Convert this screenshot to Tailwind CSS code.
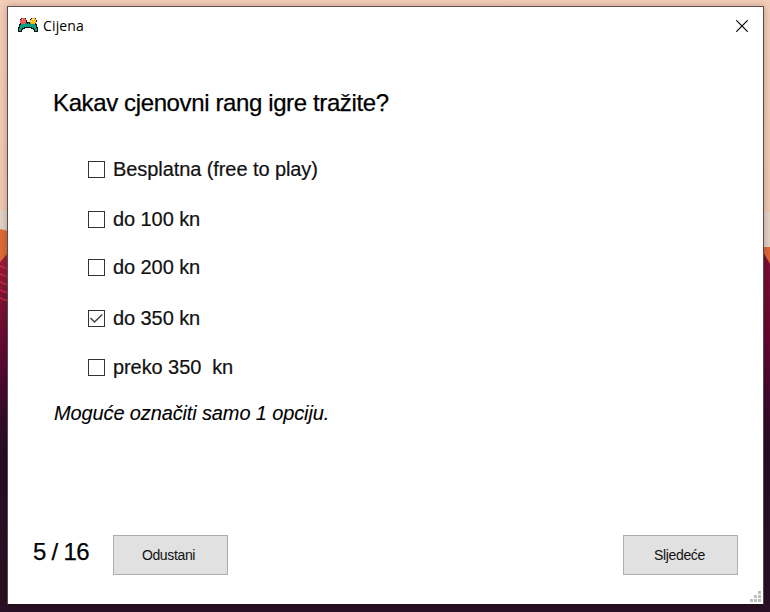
<!DOCTYPE html>
<html lang="hr">
<head>
<meta charset="utf-8">
<title>Cijena</title>
<script src="https://cdn.jsdelivr.net/npm/@tailwindcss/browser@4"></script>
</head>
<body class="relative h-[612px] w-[770px] overflow-hidden bg-[#f2cab4] pt-[6px] pl-[7px] font-['Liberation_Sans',Arial,sans-serif] text-black">
<svg class="absolute inset-0" width="770" height="612" viewBox="0 0 770 612">
  <defs>
    <linearGradient id="sky" x1="0" y1="0" x2="0" y2="1"><stop offset="0" stop-color="#f4cdb8"/><stop offset="1" stop-color="#e4bda2"/></linearGradient>
    <linearGradient id="hill" x1="0" y1="0" x2="0" y2="1"><stop offset="0" stop-color="#a51c39"/><stop offset=".12" stop-color="#7f1334"/><stop offset=".3" stop-color="#5b0932"/><stop offset=".45" stop-color="#350d2d"/><stop offset=".55" stop-color="#260e24"/><stop offset="1" stop-color="#2a1025"/></linearGradient>
    <linearGradient id="hillRight" x1="0" y1="0" x2="0" y2="1"><stop offset="0" stop-color="#7d1035"/><stop offset=".25" stop-color="#65052f"/><stop offset=".4" stop-color="#42082f"/><stop offset=".55" stop-color="#260e24"/><stop offset="1" stop-color="#2a1025"/></linearGradient>
  </defs>
  <rect width="770" height="612" fill="url(#sky)"/>
  <path d="M0 210h8v20H0zM762 212h8v36h-8z" fill="#e2d2c4"/>
  <path d="M0 229l8 2v37H0z" fill="#dc6c34"/>
  <path d="M762 247h8v20h-8z" fill="#df6534"/>
  <path d="M0 262l8-9v359H0z" fill="url(#hill)"/>
  <path d="M762 250l8 14v348h-8z" fill="url(#hillRight)"/>
  <path d="M0 266l8 3M0 274l8 3M0 282l8 3M0 290l8 3M0 298l8 3" stroke="#c02e3e" stroke-width="1.5"/>
  <path d="M0 600h770v12H0z" fill="#2a1025"/>
</svg>
<main class="relative flex h-[599px] w-[757px] flex-col border border-[#5f4f48] border-x-[#5c4a4a] border-b-[#1f0c1c] bg-white shadow-[0_0_7px_rgba(0,0,0,0.25)]">
  <header class="flex h-[38px] shrink-0 items-center pl-[10px] pr-[15px]">
    <svg class="-mt-[2px] shrink-0" width="20" height="16" viewBox="0 0 20 16" shape-rendering="crispEdges">
      <path d="M2 5h16v2h1v3h1v5h-4v-2h-1v-1h-2v-1H7v1H5v1H4v2H0v-5h1V7h1z" fill="#061512"/>
      <path d="M3 6h14v2h1v3h1v3h-2v-2h-1v-1h-2v-1H6v1H4v1H3v2H1v-3h1V8h1z" fill="#0c9d80"/>
      <path d="M2 3h1V2h1V1h3v1h1v4H7v1H3V6H2zM12 3h1V2h1V1h3v1h1v4h-1v1h-4V6h-1z" fill="#f35b5b"/>
      <path d="M12 3h1V2h1V1h3v1h1v4h-1v1h-4V6h-1z" fill="#ffb60d"/>
      <path d="M3 1h1v1H3zM7 1h1v1H7zM2 2h1v1H2zM8 3h1v2H8zM13 1h1v1h-1zM17 1h1v1h-1zM12 2h1v1h-1zM18 3h1v2h-1zM9 6h1v1H9zM11 6h1v1h-1z" fill="#241512"/>
      <path d="M14 2h2v1h-2zM13 4h1v1h-1zM16 4h1v1h-1z" fill="#fff2bd"/><path d="M4 2h1v1H4z" fill="#ffa5a3"/>
    </svg>
    <h1 class="ml-[5px] -mt-px font-['Open_Sans','Noto_Sans',sans-serif] text-[14px] leading-5 tracking-[0.15px]">Cijena</h1>
    <svg class="ml-auto" width="12" height="12" viewBox="0 0 12 12"><path d="M.3.3l11.400 11.400M11.700.3L.3 11.700" stroke="#000" stroke-width="1.200"/></svg>
  </header>
  <h2 class="mt-[44px] ml-[45px] h-7 shrink-0 text-[24px] leading-7 tracking-[-0.38px] [-webkit-text-stroke:0.25px_#000]">Kakav cjenovni rang igre tražite?</h2>
  <div class="mt-[40px] ml-[80px] grid shrink-0 grid-rows-[50px_48px_51px_49px_24px] text-[20px] leading-6 tracking-[-0.08px] text-[#111] [-webkit-text-stroke:0.2px_#111]">
    <label class="flex h-6 items-center gap-[8px]"><span class="size-[17px] border border-[#333]"></span><span>Besplatna (free to play)</span></label>
    <label class="flex h-6 items-center gap-[8px]"><span class="size-[17px] border border-[#333]"></span><span>do 100 kn</span></label>
    <label class="flex h-6 items-center gap-[8px]"><span class="size-[17px] border border-[#333]"></span><span>do 200 kn</span></label>
    <label class="flex h-6 items-center gap-[8px]"><span class="size-[17px] border border-[#333]"><svg width="15" height="15" viewBox="0 0 15 15"><path d="M1.500 7l4 4L13.200 3.500" fill="none" stroke="#444" stroke-width="1.500"/></svg></span><span>do 350 kn</span></label>
    <label class="flex h-6 items-center gap-[8px]"><span class="size-[17px] border border-[#333]"></span><span class="whitespace-pre">preko 350  kn</span></label>
  </div>
  <p class="mt-[22px] ml-[46px] h-6 shrink-0 text-[20px] leading-6 tracking-[-0.13px] italic [-webkit-text-stroke:0.1px_#111]">Moguće označiti samo 1 opciju.</p>
  <footer class="mt-auto mb-[29px] flex h-10 shrink-0 items-center pr-[25px] pl-[25px]">
    <span class="-mt-[6px] w-[80px] text-[24px] leading-7 tracking-[-0.7px] [-webkit-text-stroke:0.25px_#000]">5 / 16</span>
    <button class="h-10 w-[115px] border border-[#adadad] bg-[#e1e1e1] pr-1 text-[14px] tracking-[-0.35px] text-[#111]">Odustani</button>
    <button class="ml-auto h-10 w-[115px] border border-[#adadad] bg-[#e1e1e1] pr-0.5 text-[14px] tracking-[-0.35px] text-[#111]">Sljedeće</button>
  </footer>
  <svg class="absolute right-[2px] bottom-[2px]" width="11" height="11" viewBox="0 0 11 11"><path d="M8 0h3v3H8zM4 4h3v3H4zM8 4h3v3H8zM0 8h3v3H0zM4 8h3v3H4zM8 8h3v3H8z" fill="#bfbfbf"/></svg>
</main>
</body>
</html>
